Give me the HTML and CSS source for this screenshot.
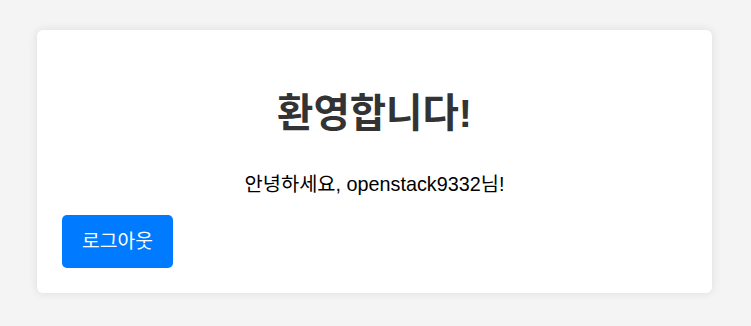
FILE: index.html
```html
<!DOCTYPE html>
<html lang="ko">
<head>
    <meta charset="UTF-8">
    <meta name="viewport" content="width=device-width, initial-scale=1.0">
    <title>환영합니다</title>
    <link rel="stylesheet" href="styles.css">
</head>
<body>
    <div class="container">
        <h1>환영합니다!</h1>
        <p class="greeting">안녕하세요, openstack9332님!</p>
        <button class="logout-btn">로그아웃</button>
    </div>
</body>
</html>
```

FILE: styles.css
```css
body {
    font-family: 'Liberation Sans', Arial, 'Noto Sans CJK KR', sans-serif;
    background-color: #f4f4f4;
    margin: 0;
    padding: 30px 39px 30px 37px;
}

.container {
    padding: 25px;
    background-color: #fff;
    border-radius: 6px;
    box-shadow: 0 0 10px rgba(0, 0, 0, 0.1);
}

h1 {
    color: #333;
    font-size: 39.5px;
    line-height: 46px;
    text-align: center;
    margin: 35px 0 36px;
}

.greeting {
    font-size: 19.8px;
    line-height: 24px;
    text-align: center;
    margin: 0 0 19px;
}

.logout-btn {
    display: block;
    font-family: inherit;
    font-size: 19.3px;
    line-height: 23px;
    padding: 15px 20px;
    background-color: #007bff;
    color: #fff;
    border: none;
    border-radius: 5px;
    cursor: pointer;
}

.logout-btn:hover {
    background-color: #0069d9;
}
```
